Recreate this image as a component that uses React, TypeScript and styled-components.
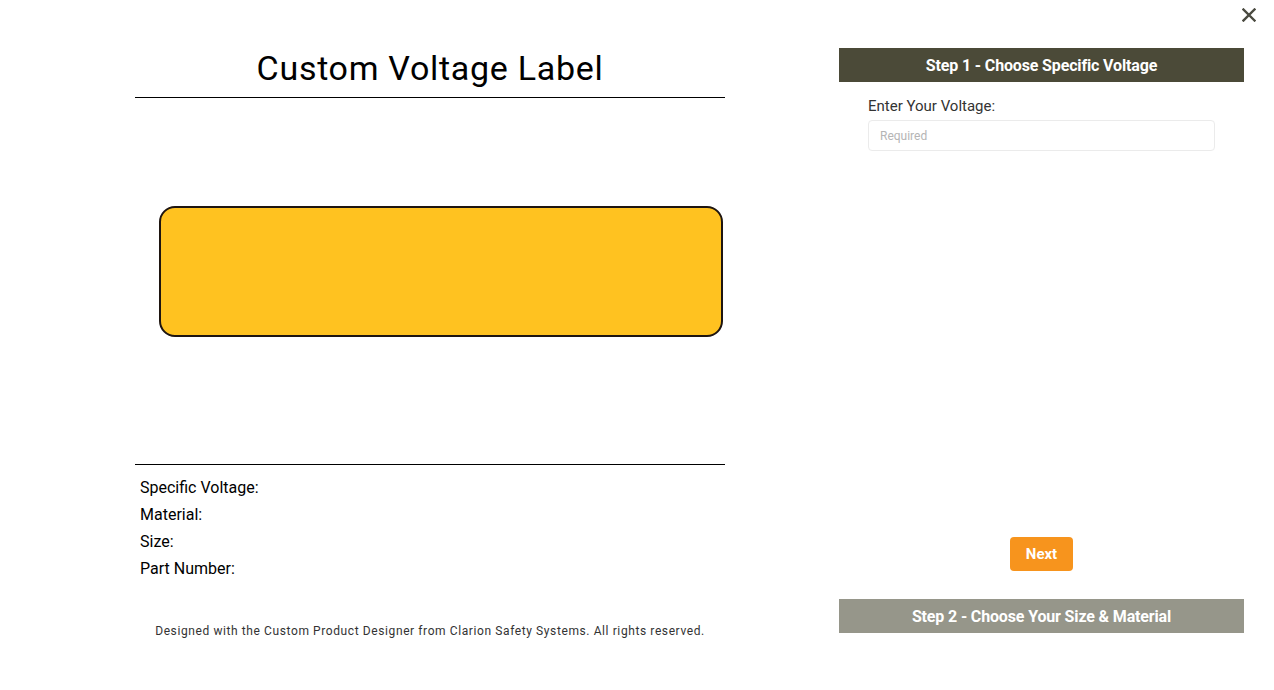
import React from "react";
import styled, { createGlobalStyle } from "styled-components";

const Global = createGlobalStyle`
  html, body { margin: 0; padding: 0; background: #fff; }
  body { font-family: Roboto, "Liberation Sans", Arial, sans-serif; color: #000; }
  * { box-sizing: border-box; }
`;

const Page = styled.div`
  position: relative;
  width: 1274px;
  height: 690px;
  display: flex;
  align-items: flex-start;
  padding: 48px 0 0 135px;
`;

const CloseButton = styled.button`
  position: absolute;
  top: 7px;
  right: 17px;
  width: 16px;
  height: 16px;
  padding: 0;
  border: none;
  background: none;
  cursor: pointer;
  display: flex;
  align-items: center;
  justify-content: center;
`;

const Preview = styled.section`
  width: 590px;
  display: flex;
  flex-direction: column;
`;

const Title = styled.h1`
  margin: 0;
  padding: 0 0 9px;
  font-size: 34px;
  line-height: 40px;
  font-weight: 400;
  text-align: center;
  letter-spacing: 0.7px;
  border-bottom: 1px solid #000;
  color: #000;
`;

const Stage = styled.div`
  height: 367px;
  display: flex;
  align-items: flex-start;
  padding: 108px 2px 0 24px;
  border-bottom: 1px solid #000;
`;

const LabelShape = styled.div`
  width: 564px;
  height: 131px;
  background: #ffc220;
  border: 2px solid #1e1510;
  border-radius: 16px;
`;

const Details = styled.div`
  padding: 9px 5px 0;
  display: flex;
  flex-direction: column;
`;

const DetailRow = styled.div`
  font-size: 16px;
  line-height: 27px;
  color: #000;
`;

const Footer = styled.p`
  margin: 41px 0 0;
  font-size: 12px;
  line-height: 16px;
  text-align: center;
  color: #333;
  letter-spacing: 0.6px;
`;

const Steps = styled.aside`
  margin-left: 114px;
  width: 405px;
  display: flex;
  flex-direction: column;
`;

const StepHeader = styled.div<{ $active?: boolean }>`
  height: 34px;
  display: flex;
  align-items: center;
  justify-content: center;
  background: ${(p) => (p.$active ? "#4b4a38" : "#96968a")};
  color: #fff;
  font-size: 16px;
  font-weight: 700;
  letter-spacing: -0.15px;
`;

const StepBody = styled.div`
  height: 517px;
  padding: 14px 29px 0;
  display: flex;
  flex-direction: column;
`;

const FieldLabel = styled.label`
  font-size: 15px;
  line-height: 18px;
  color: #333;
  margin-top: 1px;
  margin-bottom: 5px;
`;

const TextInput = styled.input`
  width: 347px;
  height: 31px;
  border: 1px solid #ebebeb;
  border-radius: 4px;
  padding: 0 11px;
  font-family: inherit;
  font-size: 12px;
  color: #333;
  outline: none;
  &::placeholder { color: #b5b5b5; }
`;

const NextButton = styled.button`
  align-self: center;
  margin-top: auto;
  margin-bottom: 28px;
  width: 63px;
  height: 34px;
  border: none;
  border-radius: 4px;
  background: #f7941d;
  color: #fff;
  font-family: inherit;
  font-size: 15px;
  font-weight: 700;
  cursor: pointer;
`;

export default function App() {
  return (
    <>
      <Global />
      <Page>
        <Preview>
          <Title>Custom Voltage Label</Title>
          <Stage>
            <LabelShape />
          </Stage>
          <Details>
            <DetailRow>Specific Voltage:</DetailRow>
            <DetailRow>Material:</DetailRow>
            <DetailRow>Size:</DetailRow>
            <DetailRow>Part Number:</DetailRow>
          </Details>
          <Footer>
            Designed with the Custom Product Designer from Clarion Safety Systems. All rights reserved.
          </Footer>
        </Preview>
        <Steps>
          <StepHeader $active>Step 1 - Choose Specific Voltage</StepHeader>
          <StepBody>
            <FieldLabel>Enter Your Voltage:</FieldLabel>
            <TextInput placeholder="Required" />
            <NextButton>Next</NextButton>
          </StepBody>
          <StepHeader>Step 2 - Choose Your Size &amp; Material</StepHeader>
        </Steps>
        <CloseButton aria-label="Close">
          <svg width="14" height="14" viewBox="0 0 14 14">
            <path d="M1.5 1.5 L12.5 12.5 M12.5 1.5 L1.5 12.5" stroke="#4a4a40" strokeWidth="2.4" strokeLinecap="square" />
          </svg>
        </CloseButton>
      </Page>
    </>
  );
}
